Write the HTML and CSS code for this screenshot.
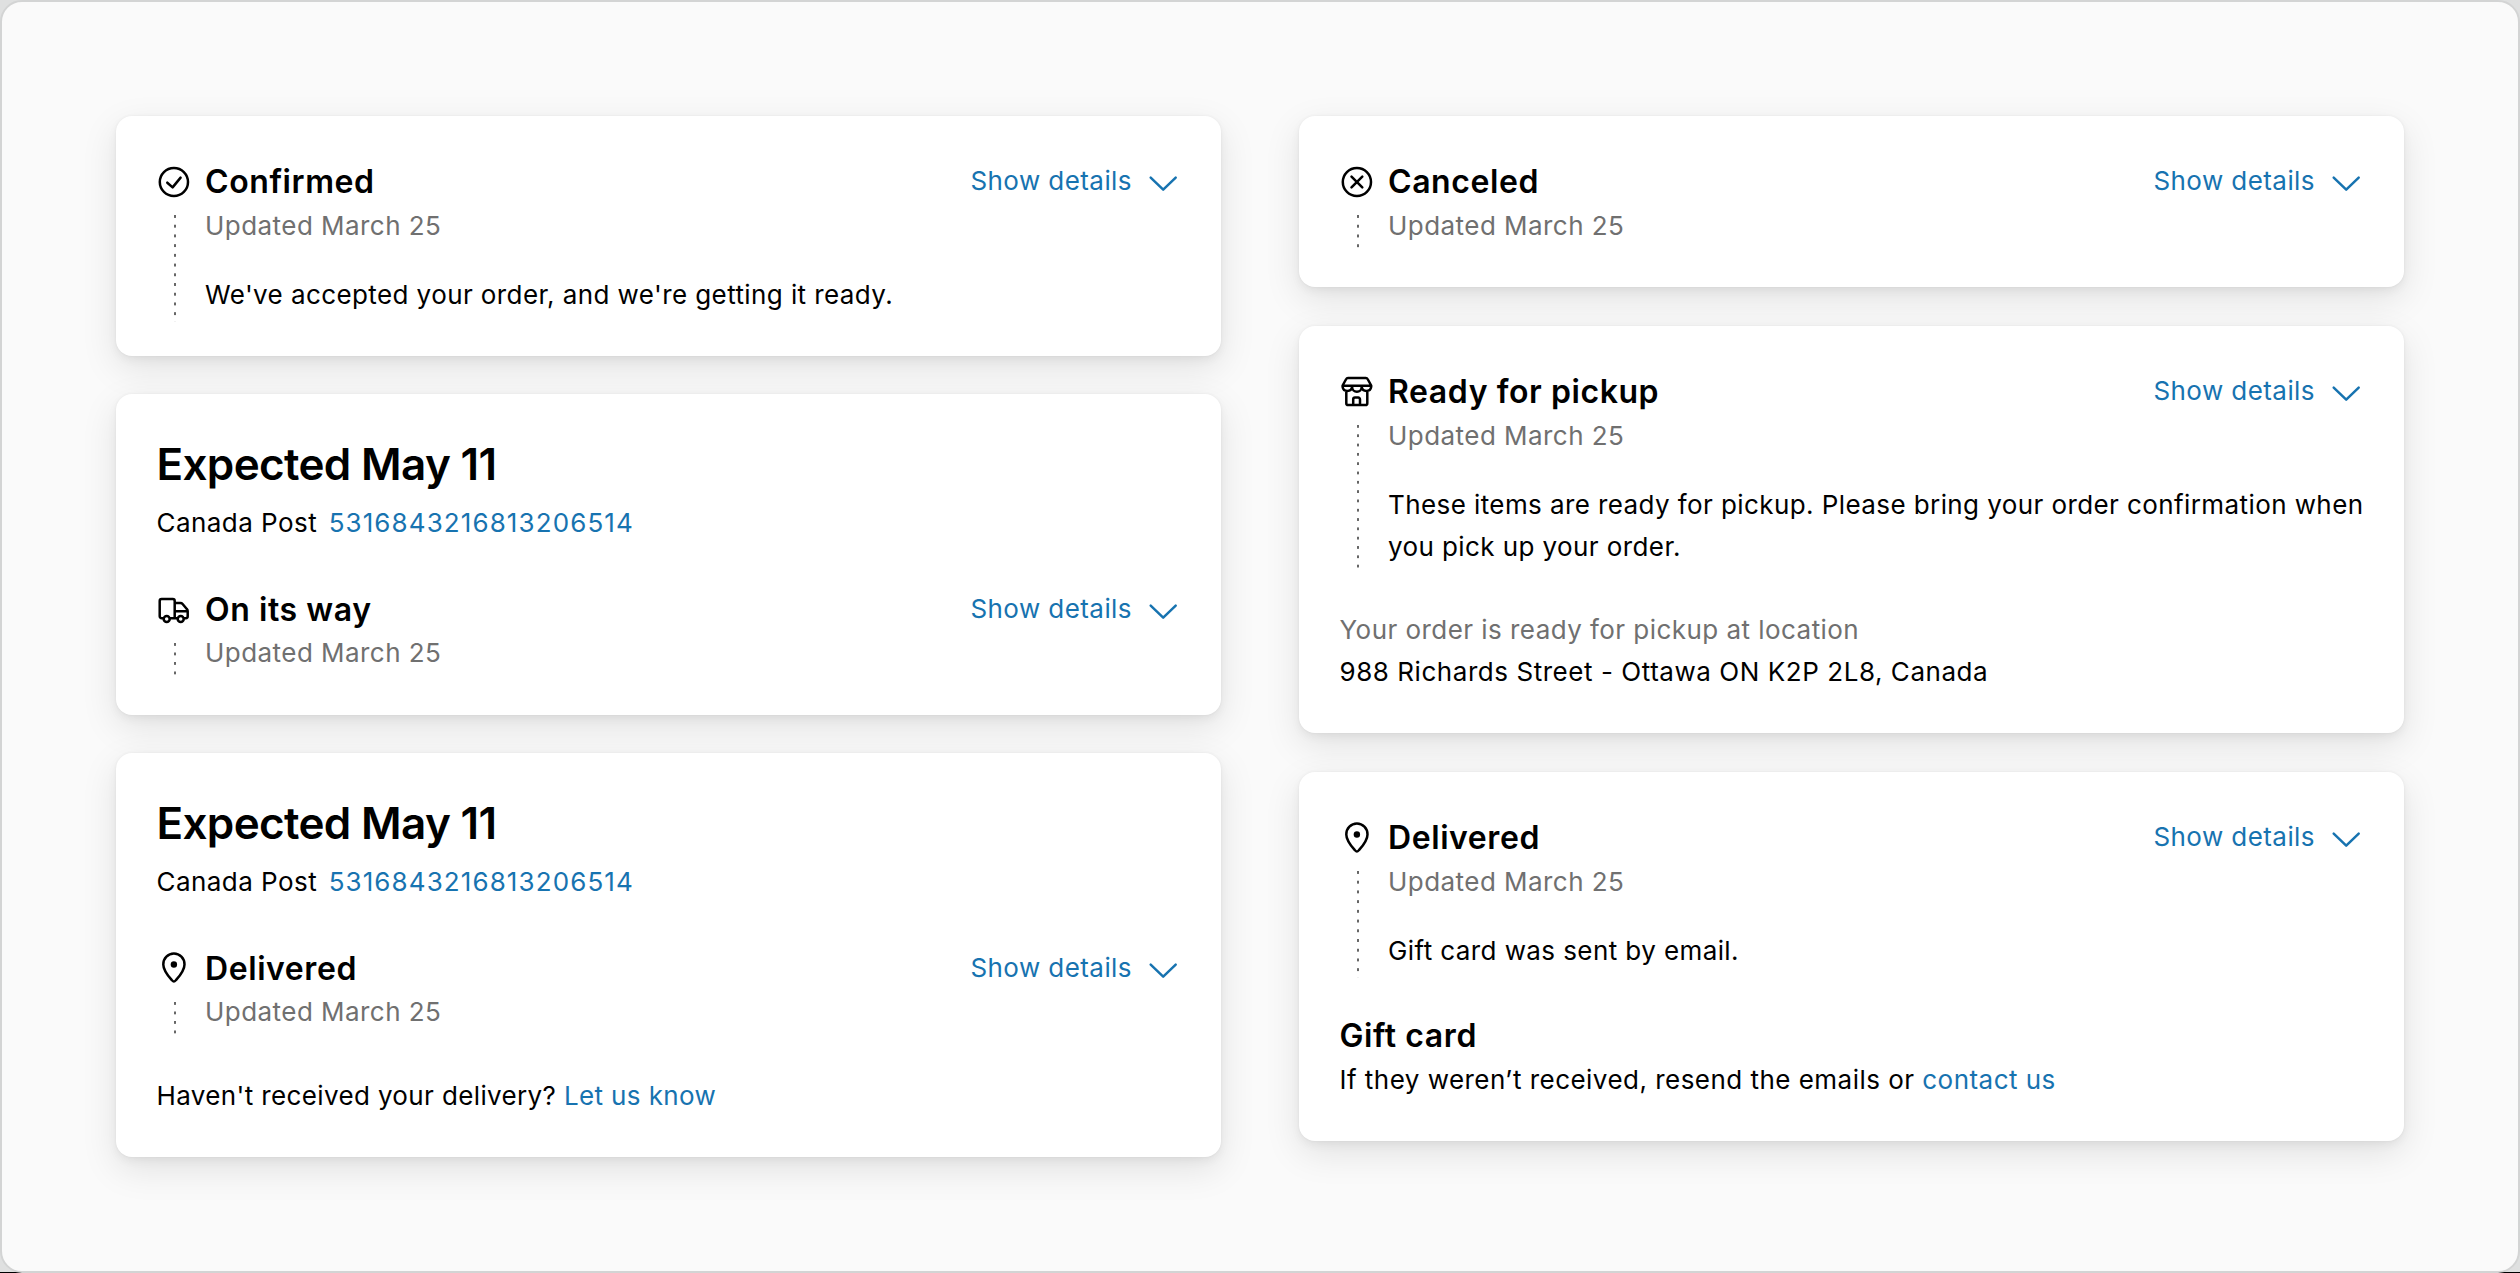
FILE: index.html
```
<!DOCTYPE html>
<html lang="en">
<head>
<meta charset="utf-8">
<title>Order status</title>
<link rel="stylesheet" href="styles.css">
</head>
<body>
<svg class="sprite" aria-hidden="true">
  <symbol id="check" viewBox="0 0 36 36"><circle cx="17.9" cy="18" r="14.1"/><path d="M11.3 18.7l5.3 4.7 8-9.8"/></symbol>
  <symbol id="cancel" viewBox="0 0 36 36"><circle cx="17.9" cy="18" r="14.1"/><path d="M12.5 12.6l10.8 10.8M23.3 12.6L12.5 23.4"/></symbol>
  <symbol id="truck" viewBox="0 0 36 36"><path d="M7.4 27.2H5.6a1.9 1.9 0 0 1-1.9-1.9V10a1.9 1.9 0 0 1 1.9-1.9h11.2a1.9 1.9 0 0 1 1.9 1.9v17.2M14 27.2h7.4M28.1 27.2h1.7a1.9 1.9 0 0 0 1.9-1.9v-5.1a3 3 0 0 0-.9-2.2l-4.2-5a3 3 0 0 0-2.2-1h-5.3M18.7 20.3h12.7"/><circle cx="10.7" cy="28" r="3"/><circle cx="24.7" cy="28" r="3"/></symbol>
  <symbol id="store" viewBox="0 0 36 36"><path d="M9 3.9h17.8a2 2 0 0 1 1.8 1.1l3.6 6.5v1.4a4.8 4.8 0 0 1-9.5 0a4.8 4.8 0 0 1-9.6 0a4.8 4.8 0 0 1-9.5 0v-1.4L7.2 5A2 2 0 0 1 9 3.9zM3.8 11.7h28.2M13.1 11.7v1.2M22.7 11.7v1.2M7.3 17.6v11.6a1.9 1.9 0 0 0 1.9 1.9h17.2a1.9 1.9 0 0 0 1.9-1.9V17.6M14.2 31v-5.6a1.8 1.8 0 0 1 1.8-1.8h3.2a1.8 1.8 0 0 1 1.8 1.8V31"/></symbol>
  <symbol id="pin" viewBox="0 0 36 36"><path d="M17.9 31.6c-.8 0-1.3-.6-2-1.4C12.3 26 7.3 20.6 7.3 14.4a10.6 10.9 0 0 1 21.2 0c0 6.2-5 11.6-8.6 15.8-.7.8-1.2 1.4-2 1.4z"/><circle class="dot" cx="17.9" cy="14.5" r="3.2"/></symbol>
  <symbol id="chevron" viewBox="0 0 34 34"><path d="M4.7 11.6L17.2 23.6 29.7 11.6"/></symbol>
</svg>
<main class="frame">
  <div class="column">
    <section class="card">
      <div class="status">
        <div class="marker"><svg class="icon"><use href="#check"/></svg><span class="rail"></span></div>
        <div class="content">
          <div class="top"><h3 class="title">Confirmed</h3><a class="toggle">Show details<svg class="chevron"><use href="#chevron"/></svg></a></div>
          <p class="muted">Updated March 25</p>
          <p class="message">We've accepted your order, and we're getting it ready.</p>
        </div>
      </div>
    </section>
    <section class="card">
      <h2 class="heading">Expected May 11</h2>
      <p class="tracking">Canada Post<a class="link number">5316843216813206514</a></p>
      <div class="status">
        <div class="marker"><svg class="icon"><use href="#truck"/></svg><span class="rail"></span></div>
        <div class="content">
          <div class="top"><h3 class="title">On its way</h3><a class="toggle">Show details<svg class="chevron"><use href="#chevron"/></svg></a></div>
          <p class="muted">Updated March 25</p>
        </div>
      </div>
    </section>
    <section class="card">
      <h2 class="heading">Expected May 11</h2>
      <p class="tracking">Canada Post<a class="link number">5316843216813206514</a></p>
      <div class="status">
        <div class="marker"><svg class="icon"><use href="#pin"/></svg><span class="rail"></span></div>
        <div class="content">
          <div class="top"><h3 class="title">Delivered</h3><a class="toggle">Show details<svg class="chevron"><use href="#chevron"/></svg></a></div>
          <p class="muted">Updated March 25</p>
        </div>
      </div>
      <div class="footer"><p class="help">Haven't received your delivery? <a class="link">Let us know</a></p></div>
    </section>
  </div>
  <div class="column">
    <section class="card">
      <div class="status">
        <div class="marker"><svg class="icon"><use href="#cancel"/></svg><span class="rail"></span></div>
        <div class="content">
          <div class="top"><h3 class="title">Canceled</h3><a class="toggle">Show details<svg class="chevron"><use href="#chevron"/></svg></a></div>
          <p class="muted">Updated March 25</p>
        </div>
      </div>
    </section>
    <section class="card">
      <div class="status">
        <div class="marker"><svg class="icon"><use href="#store"/></svg><span class="rail"></span></div>
        <div class="content">
          <div class="top"><h3 class="title">Ready for pickup</h3><a class="toggle">Show details<svg class="chevron"><use href="#chevron"/></svg></a></div>
          <p class="muted">Updated March 25</p>
          <p class="message">These items are ready for pickup. Please bring your order confirmation when you pick up your order.</p>
        </div>
      </div>
      <div class="footer">
        <p class="muted">Your order is ready for pickup at location</p>
        <p class="address">988 Richards Street - Ottawa ON K2P 2L8, Canada</p>
      </div>
    </section>
    <section class="card">
      <div class="status">
        <div class="marker"><svg class="icon"><use href="#pin"/></svg><span class="rail"></span></div>
        <div class="content">
          <div class="top"><h3 class="title">Delivered</h3><a class="toggle">Show details<svg class="chevron"><use href="#chevron"/></svg></a></div>
          <p class="muted">Updated March 25</p>
          <p class="message">Gift card was sent by email.</p>
        </div>
      </div>
      <div class="footer">
        <h3 class="title">Gift card</h3>
        <p class="note">If they weren’t received, resend the emails or <a class="link">contact us</a></p>
      </div>
    </section>
  </div>
</main>
</body>
</html>
```
FILE: styles.css
```
* { box-sizing: border-box; margin: 0; padding: 0; }

body {
  height: 1273px;
  overflow: hidden;
  background: linear-gradient(#000, #000) 0 100% / 100% 1px no-repeat, #dfe0e0;
  font: 400 26px/42px Inter, "Liberation Sans", sans-serif;
  letter-spacing: 0.45px;
  color: #000;
}

.sprite { position: absolute; width: 0; height: 0; }

.frame {
  display: grid;
  grid-template-columns: 1105px 1105px;
  column-gap: 78px;
  align-items: start;
  height: 1273px;
  padding: 114px 114px 0;
  border: 2px solid #d3d4d4;
  border-radius: 22px;
  background: #fafafa;
}

.column { display: flex; flex-direction: column; gap: 38.5px; }

.card {
  padding: 42.4px 40.5px 40.6px 40.5px;
  border-radius: 16px;
  background: #fff;
  box-shadow: 0 0 3px rgba(0, 0, 0, 0.05), 0 12px 36px rgba(0, 0, 0, 0.1), 0 4px 10px rgba(0, 0, 0, 0.05);
}

.heading {
  margin: -1px 0 10.5px;
  font-size: 44px;
  font-weight: 600;
  line-height: 56px;
  letter-spacing: -0.65px;
}

.tracking { margin-bottom: 41.5px; }
.link { color: #1773b0; }
.number { margin-left: 11.5px; letter-spacing: 1.1px; }

.status { display: flex; }

.marker {
  display: flex;
  flex: 0 0 49px;
  flex-direction: column;
  margin: 0 0.5px 0 -0.5px;
}

.content { flex: 1; margin-left: -0.5px; }

.icon { width: 36px; height: 36px; margin: 5.5px 0 0 -0.5px; }

.icon, .chevron {
  fill: none;
  stroke: currentColor;
  stroke-width: 2.5;
  stroke-linecap: round;
  stroke-linejoin: round;
}

.dot { fill: currentColor; stroke: none; }

.rail {
  flex: 1;
  width: 2px;
  margin: 15.5px 0 -7px 18px;
  background: linear-gradient(#666 3px, transparent 3px) 0 0 / 2px 9.5px;
  background-repeat: no-repeat round;
}

.top { display: flex; justify-content: space-between; height: 46.5px; }

.title {
  height: 46.5px;
  font-size: 32px;
  font-weight: 600;
  line-height: 48px;
  letter-spacing: 0.58px;
}

.toggle {
  display: flex;
  align-items: center;
  gap: 13.5px;
  height: 42px;
  margin: 1.7px 1px 0 0;
  color: #1773b0;
  letter-spacing: 0.43px;
}

.chevron { width: 34px; height: 34px; margin-top: 4px; }
.muted { color: #707070; }
.message { margin: 27.3px 0 -0.8px; letter-spacing: 0.41px; }
.footer { margin-top: 41.2px; }
.help { letter-spacing: 0.37px; }
.address { letter-spacing: 0.55px; }
.note { letter-spacing: 0.47px; }
```
